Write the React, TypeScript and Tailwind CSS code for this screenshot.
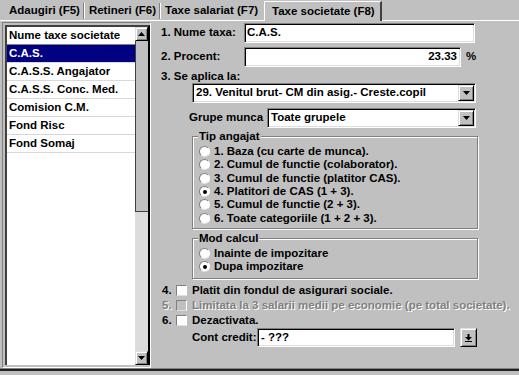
import type { ReactNode } from 'react'

// ---------------------------------------------------------------------------
// small win95 widgets
// ---------------------------------------------------------------------------

const sunken = 'bg-white border border-t-[#808080] border-l-[#808080] border-r-white border-b-white shadow-[inset_1px_1px_0_#000,inset_-1px_-1px_0_#dfdfdf]'
const raised = 'bg-[#c0c0c0] border border-t-[#dfdfdf] border-l-[#dfdfdf] border-r-black border-b-black shadow-[inset_1px_1px_0_#fff,inset_-1px_-1px_0_#808080]'

function Arrow({ up = false }: { up?: boolean }) {
  return (
    <svg width="7" height="4" viewBox="0 0 7 4">
      <polygon points={up ? '3.5,0 7,4 0,4' : '0,0 7,0 3.5,4'} fill="#000" />
    </svg>
  )
}

function ArrowButton({ up = false, className = '' }: { up?: boolean; className?: string }) {
  return (
    <div className={`${raised} flex items-center justify-center ${className}`}>
      <Arrow up={up} />
    </div>
  )
}

function Select({ value, width }: { value: string; width: string }) {
  return (
    <div className={`${sunken} ${width} h-[20px] flex items-center pl-[3px] pr-[1px]`}>
      <span className="flex-1 truncate">{value}</span>
      <ArrowButton className="w-[16px] h-[16px]" />
    </div>
  )
}

function Radio({ checked = false, children }: { checked?: boolean; children: ReactNode }) {
  return (
    <div className="flex items-center h-[13.3px]">
      <span className="w-[11px] h-[11px] rounded-full bg-white border border-t-[#808080] border-l-[#808080] border-r-white border-b-[#dfdfdf] flex items-center justify-center">
        {checked && <span className="w-[4px] h-[4px] rounded-full bg-black" />}
      </span>
      <span className="ml-[4px]">{children}</span>
    </div>
  )
}

function Check({ num, disabled = false, children }: { num: string; disabled?: boolean; children: ReactNode }) {
  const dis = 'text-[#808080] [text-shadow:1px_1px_0_#fff]'
  return (
    <div className="flex items-center h-[15px] ml-[11px]">
      <span className={`w-[14px] ${disabled ? dis : ''}`}>{num}</span>
      <span className={`w-[11px] h-[11px] border border-t-[#808080] border-l-[#808080] border-r-white border-b-[#dfdfdf] ${disabled ? 'bg-[#c0c0c0]' : 'bg-white'}`} />
      <span className={`ml-[5px] ${disabled ? dis : ''}`}>{children}</span>
    </div>
  )
}

function Group({ title, className, children }: { title: string; className: string; children: ReactNode }) {
  return (
    <div className={`relative ml-[41px] w-[286px] border border-[#808080] shadow-[1px_1px_0_#fff,inset_1px_1px_0_#fff] ${className}`}>
      <span className="absolute -top-[8px] left-[5px] bg-[#c0c0c0] px-px leading-[14px]">{title}</span>
      {children}
    </div>
  )
}

// ---------------------------------------------------------------------------
// page
// ---------------------------------------------------------------------------

const rows = ['C.A.S.', 'C.A.S.S. Angajator', 'C.A.S.S. Conc. Med.', 'Comision C.M.', 'Fond Risc', 'Fond Somaj']

export default function App() {
  return (
    <div className="w-[519px] h-[375px] overflow-hidden whitespace-nowrap bg-[#c0c0c0] text-black font-bold text-[11.5px] font-['Liberation_Sans',Arial,sans-serif] flex flex-col">
      {/* tabs */}
      <div className="h-[21px] flex items-stretch shrink-0">
        <div className="w-[264px] flex items-center pl-[9px] mt-[2px] border-b border-white">
          <span>Adaugiri (F5)</span>
          <span className="ml-[3px] w-[2px] h-[16px] border-l border-[#808080] border-r border-r-white" />
          <span className="ml-[4px]">Retineri (F6)</span>
          <span className="ml-[3px] w-[2px] h-[16px] border-l border-[#808080] border-r border-r-white" />
          <span className="ml-[4px]">Taxe salariat (F7)</span>
        </div>
        <div className="mt-px pl-[7px] w-[118px] flex items-center border-l border-t border-white border-r-2 border-r-[#404040]">
          Taxe societate (F8)
        </div>
        <div className="flex-1 border-b border-white" />
      </div>

      <div className="flex h-[347px] shrink-0">
        {/* left list */}
        <div className="ml-[2px] mt-px w-[149px] h-[346px] border border-t-[#808080] border-l-[#808080] border-r-white border-b-white p-[2px] pr-0">
          <div className="h-full flex border-t-2 border-l-2 border-t-[#404040] border-l-[#404040] border-r-2 border-r-black bg-white">
            <div className="flex-1">
              <div className="h-[18px] pl-[2px] flex items-center border-b border-[#808080]">Nume taxe societate</div>
              {rows.map((r, i) => (
                <div key={r} className="h-[18px] border-b border-[#d8d8d8]">
                  <div className={`h-[17px] pl-[2px] flex items-center ${i === 0 ? 'bg-[#000080] text-white' : ''}`}>{r}</div>
                </div>
              ))}
            </div>
            <div className="w-[13px] flex flex-col bg-[#dcdcdc]">
              <ArrowButton up className="h-[14px] shrink-0" />
              <div className="h-[171px] bg-[#c0c0c0] border-l border-b border-[#404040]" />
              <div className="flex-1" />
              <ArrowButton className="h-[14px] shrink-0" />
            </div>
          </div>
        </div>

        {/* form */}
        <div className="flex-1 flex flex-col">
          <div className="mt-[2px] h-[20px] flex items-center">
            <span className="ml-[10px] w-[83px]">1. Nume taxa:</span>
            <div className={`${sunken} w-[231px] h-[20px] flex items-center pl-[2px]`}>C.A.S.</div>
          </div>
          <div className="mt-[4px] h-[20px] flex items-center">
            <span className="ml-[10px] w-[83px]">2. Procent:</span>
            <div className={`${sunken} w-[217px] h-[20px] flex items-center justify-end pr-[3px]`}>23.33</div>
            <span className="ml-[5px]">%</span>
          </div>
          <div className="mt-[3px] h-[13px] ml-[10px] flex items-center">3. Se aplica la:</div>
          <div className="ml-[41px] mt-0">
            <Select value="29. Venitul brut- CM din asig.- Creste.copil" width="w-[284px]" />
          </div>
          <div className="mt-[5px] h-[20px] flex items-center">
            <span className="ml-[38px] w-[78px]">Grupe munca</span>
            <Select value="Toate grupele" width="w-[209px]" />
          </div>

          <Group title="Tip angajat" className="mt-[8px] h-[93px] pt-[8px] pl-[6px]">
            <Radio>1. Baza (cu carte de munca).</Radio>
            <Radio>2. Cumul de functie (colaborator).</Radio>
            <Radio>3. Cumul de functie (platitor CAS).</Radio>
            <Radio checked>4. Platitori de CAS (1 + 3).</Radio>
            <Radio>5. Cumul de functie (2 + 3).</Radio>
            <Radio>6. Toate categoriile (1 + 2 + 3).</Radio>
          </Group>

          <Group title="Mod calcul" className="mt-[9px] h-[41px] pt-[8px] pl-[6px]">
            <Radio>Inainte de impozitare</Radio>
            <Radio checked>Dupa impozitare</Radio>
          </Group>

          <div className="mt-[4px]">
            <Check num="4.">Platit din fondul de asigurari sociale.</Check>
            <Check num="5." disabled>Limitata la 3 salarii medii pe economie (pe total societate).</Check>
            <Check num="6.">Dezactivata.</Check>
          </div>

          <div className="mt-0 h-[19px] flex items-center">
            <span className="ml-[41px] w-[65px]">Cont credit:</span>
            <div className={`${sunken} w-[198px] h-[19px] flex items-center pl-[3px]`}>- ???</div>
            <div className={`${raised} ml-[5px] w-[17px] h-[19px] flex items-center justify-center`}>
              <svg width="7" height="8" viewBox="0 0 7 8">
                <rect x="2.5" y="0" width="2" height="3" fill="#000" />
                <polygon points="0,3 7,3 3.5,6.5" fill="#000" />
                <rect x="0" y="7" width="7" height="1" fill="#000" />
              </svg>
            </div>
          </div>
        </div>
      </div>

      {/* bottom edge */}
      <div className="h-px bg-[#808080] shrink-0" />
      <div className="h-[2px] bg-[#202020] shrink-0" />
    </div>
  )
}
